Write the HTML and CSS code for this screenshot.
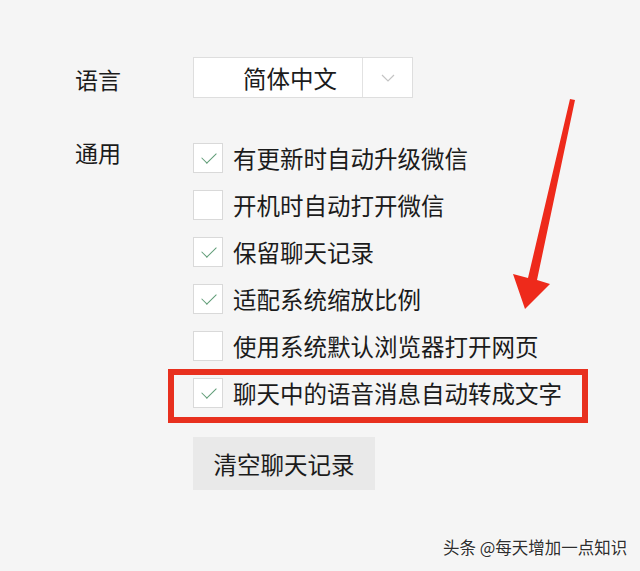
FILE: index.html
```html
<!DOCTYPE html>
<html lang="zh-CN">
<head>
<meta charset="utf-8">
<link rel="stylesheet" href="styles.css">
</head>
<body>
<div class="page">
  <div class="settings">
    <div class="label lang-label">语言</div>
    <div class="select">
      <div class="select-value">简体中文</div>
      <div class="select-btn">
        <svg width="14" height="8" viewBox="0 0 14 8"><path d="M1 1 L7 7 L13 1" fill="none" stroke="#c4c4c4" stroke-width="1.2"/></svg>
      </div>
    </div>

    <div class="label gen-label">通用</div>
    <div class="options">
      <div class="opt"><span class="box on"></span><span class="txt">有更新时自动升级微信</span></div>
      <div class="opt"><span class="box"></span><span class="txt">开机时自动打开微信</span></div>
      <div class="opt"><span class="box on"></span><span class="txt">保留聊天记录</span></div>
      <div class="opt"><span class="box on"></span><span class="txt">适配系统缩放比例</span></div>
      <div class="opt"><span class="box"></span><span class="txt">使用系统默认浏览器打开网页</span></div>
      <div class="opt"><span class="box on"></span><span class="txt">聊天中的语音消息自动转成文字</span></div>
      <button class="clear-btn">清空聊天记录</button>
    </div>
  </div>

  <div class="highlight"></div>
  <svg class="arrow" width="640" height="571" viewBox="0 0 640 571">
    <polygon points="570,99 575,100 537,280 550,284 525,309 513,274 528,278" fill="#ee2a1b"/>
  </svg>
  <div class="watermark">头条 @每天增加一点知识</div>
</div>
</body>
</html>
```

FILE: styles.css
```css
html, body {
  margin: 0;
  padding: 0;
  background: #f5f5f5;
}
body {
  font-family: "Noto Sans CJK SC", "Noto Sans", sans-serif;
  color: #1b1b1b;
}
.page {
  position: relative;
  width: 640px;
  height: 571px;
  overflow: hidden;
  box-sizing: border-box;
  padding: 57px 0 0 75px;
}
.settings {
  display: grid;
  grid-template-columns: 118px auto;
  row-gap: 45px;
  align-items: start;
}
.label {
  font-size: 23px;
  line-height: 30px;
}
.lang-label {
  align-self: center;
  margin-top: 2px;
}
.gen-label {
  margin-top: -6px;
}
.select {
  display: flex;
  width: 220px;
  height: 41px;
  box-sizing: border-box;
  background: #ffffff;
  border: 1px solid #dedede;
}
.select-value {
  width: 169px;
  box-sizing: border-box;
  padding-left: 24px;
  display: flex;
  align-items: center;
  justify-content: center;
  font-size: 23.5px;
  border-right: 1px solid #e2e2e2;
}
.select-btn {
  flex: 1;
  display: flex;
  align-items: center;
  justify-content: center;
}
.options {
  display: flex;
  flex-direction: column;
  align-items: flex-start;
  gap: 17px;
}
.opt {
  display: flex;
  align-items: center;
  height: 30px;
  gap: 10px;
}
.box {
  width: 30px;
  height: 30px;
  box-sizing: border-box;
  background: #ffffff;
  border: 1px solid #d9d9d9;
  position: relative;
}
.box.on::after {
  content: "";
  position: absolute;
  left: 8px;
  top: 8px;
  width: 13px;
  height: 7px;
  border-left: 1.3px solid #5f9c76;
  border-bottom: 1.3px solid #5f9c76;
  transform: rotate(-45deg);
  transform-origin: center;
}
.txt {
  font-size: 23.5px;
  line-height: 30px;
  white-space: nowrap;
}
.clear-btn {
  margin-top: 12px;
  width: 182px;
  height: 53px;
  border: none;
  background: #e9e9e9;
  font-family: inherit;
  font-size: 23.5px;
  color: #1b1b1b;
  padding: 0;
}
.highlight {
  position: absolute;
  left: 168px;
  top: 369px;
  width: 420px;
  height: 54px;
  box-sizing: border-box;
  border: 6px solid #e8301e;
}
.arrow {
  position: absolute;
  left: 0;
  top: 0;
}
.watermark {
  position: absolute;
  left: 443px;
  top: 535px;
  font-size: 16.5px;
  color: #2e2e2e;
  white-space: nowrap;
  text-shadow: 0 0 2px #ffffff, 0 0 2px #ffffff;
}
```
